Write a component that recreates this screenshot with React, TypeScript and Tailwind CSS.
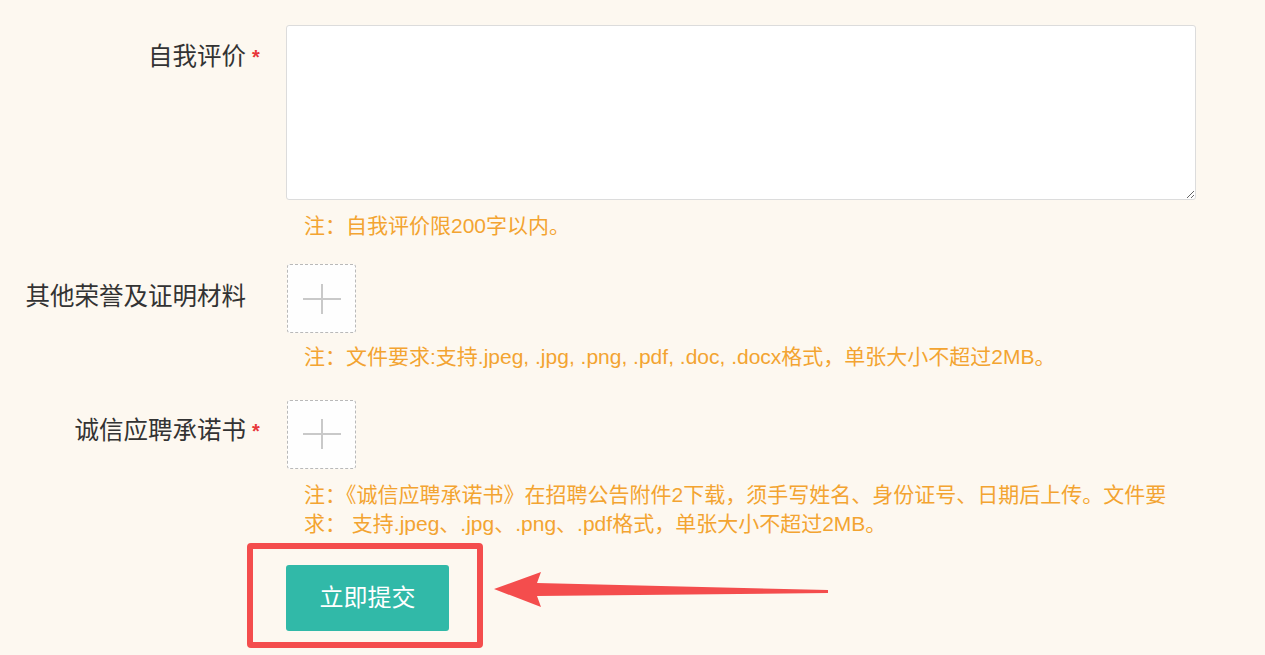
import React from "react";

function Plus() {
  return (
    <svg width="40" height="32" viewBox="0 0 40 32" className="block">
      <line x1="1" y1="16" x2="39" y2="16" stroke="#c9c9c9" strokeWidth="2" />
      <line x1="20" y1="1" x2="20" y2="31" stroke="#c9c9c9" strokeWidth="2" />
    </svg>
  );
}

function UploadBox() {
  return (
    <div className="ml-[1px] flex h-[69px] w-[69px] items-center justify-center rounded-[3px] border border-dashed border-[#b9b9b9] bg-[#fefefe]">
      <Plus />
    </div>
  );
}

function Label({ text, star, pt }: { text: string; star?: boolean; pt: string }) {
  return (
    <div className={`w-[286px] flex-none pr-[40px] text-right ${pt}`}>
      <span className="relative text-[24.5px] leading-[32px] text-[#333333]">
        {text}
        {star && (
          <span className="absolute left-full top-[4px] ml-[6px] text-[20px] font-bold leading-[20px] text-[#e8373a]">*</span>
        )}
      </span>
    </div>
  );
}

export default function App() {
  return (
    <div className="min-h-screen w-full bg-[#fdf8f0] pt-[25px] font-['Liberation_Sans','Noto_Sans_CJK_SC',sans-serif]">
      {/* Row 1 */}
      <div className="flex">
        <Label text="自我评价" star pt="pt-[16px]" />
        <div className="w-[910px]">
          <textarea className="block h-[175px] w-full rounded-[3px] border border-[#dcdcdc] bg-white p-2 outline-none" />
          <div className="mt-[11px] pl-[18px] text-[21px] leading-[29.4px] text-[#f3a431]">
            注：自我评价限200字以内。
          </div>
        </div>
      </div>

      {/* Row 2 */}
      <div className="mt-[24px] flex">
        <Label text="其他荣誉及证明材料" pt="pt-[17px]" />
        <div className="w-[910px]">
          <UploadBox />
          <div className="mt-[9px] pl-[18px] text-[21px] leading-[29.4px] text-[#f3a431]">
            注：文件要求:支持.jpeg, .jpg, .png, .pdf, .doc, .docx格式，单张大小不超过2MB。
          </div>
        </div>
      </div>

      {/* Row 3 */}
      <div className="mt-[28px] flex">
        <Label text="诚信应聘承诺书" star pt="pt-[15px]" />
        <div className="w-[910px]">
          <UploadBox />
          <div className="mt-[11px] pl-[18px] pr-[16px] text-[21px] leading-[29.4px] text-[#f3a431]">
            注：《诚信应聘承诺书》在招聘公告附件2下载，须手写姓名、身份证号、日期后上传。文件要求： 支持.jpeg、.jpg、.png、.pdf格式，单张大小不超过2MB。
          </div>
        </div>
      </div>

      {/* Submit */}
      <div className="mt-[26px] flex">
        <div className="w-[286px] flex-none" />
        <div className="relative">
          <button className="h-[66px] w-[163px] rounded-[3px] bg-[#31b9a8] text-[24px] text-white">
            立即提交
          </button>
          <div className="pointer-events-none absolute -left-[39px] -top-[22px] h-[105px] w-[236px] rounded-[4px] border-[6px] border-[#f44d4d]" />
          <svg
            className="pointer-events-none absolute left-[204px] -top-[2px]"
            width="350"
            height="50"
            viewBox="490 563 350 50"
          >
            <polygon
              points="494,589 541,572 537,583 828,590 828,593 537,596 541,607"
              fill="#f44d4d"
            />
          </svg>
        </div>
      </div>
    </div>
  );
}
